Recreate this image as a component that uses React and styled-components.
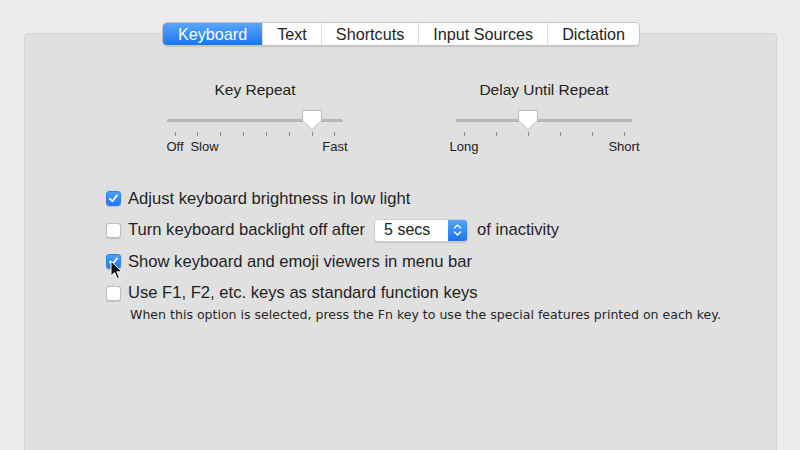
import React from 'react'
import styled, { createGlobalStyle } from 'styled-components'

const GlobalStyle = createGlobalStyle`
  html, body {
    margin: 0;
    padding: 0;
    background: #ececec;
    font-family: 'Liberation Sans', Arial, Helvetica, sans-serif;
    color: #262626;
  }
  * { box-sizing: border-box; }
`

const Window = styled.div`
  width: 800px;
  height: 450px;
  overflow: hidden;
  background: #ececec;
  padding: 33px 23px 0 24px;
  position: relative;
`

const Panel = styled.div`
  height: 440px;
  background: #e0e0e0;
  border: 1px solid #d4d4d4;
  border-radius: 4px;
  display: flex;
  flex-direction: column;
`

const TabBar = styled.div`
  align-self: center;
  display: flex;
  margin-top: -12px;
  margin-left: 1px;
  height: 24px;
  background: #fff;
  border: 1px solid #c4c4c4;
  border-radius: 5px;
  box-shadow: 0 1px 1px rgba(0, 0, 0, 0.12);
  overflow: hidden;
`

const Tab = styled.div`
  display: flex;
  align-items: center;
  justify-content: center;
  padding: 0 ${({ pad }) => pad}px;
  font-size: 16.2px;
  color: ${({ active }) => (active ? '#fff' : '#1f1f1f')};
  background: ${({ active }) => (active ? 'linear-gradient(#5aa6fd, #1a76f5)' : '#fff')};
  border-left: ${({ first }) => (first ? 'none' : '1px solid #dcdcdc')};
`

const SliderRow = styled.div`
  display: flex;
  justify-content: center;
  gap: 113px;
  margin-top: 34px;
  margin-left: -2px;
`

const SliderCol = styled.div`
  width: 176px;
  display: flex;
  flex-direction: column;
  align-items: stretch;
`

const SliderTitle = styled.div`
  text-align: center;
  font-size: 15.5px;
  line-height: 20px;
  color: #222;
`

const TrackArea = styled.div`
  position: relative;
  height: 20px;
  margin-top: 10px;
  display: flex;
  align-items: center;
`

const Track = styled.div`
  flex: 1;
  height: 3px;
  border-radius: 2px;
  background: #b5b5b5;
`

const Thumb = styled.svg`
  position: absolute;
  top: -1px;
  width: 22px;
  height: 23px;
`

const TickGrid = styled.div`
  display: grid;
  grid-template-columns: repeat(${({ n }) => n}, ${({ cell }) => cell}px);
  margin-left: ${({ cell }) => 8 - cell / 2}px;
  justify-items: center;
`

const Tick = styled.div`
  width: 1px;
  height: 4px;
  background: #8c8c8c;
  margin-top: 2px;
`

const TickLabel = styled.div`
  font-size: 13px;
  line-height: 16px;
  margin-top: 3px;
  white-space: nowrap;
  color: #222;
  grid-row: 2;
  justify-self: ${({ start }) => (start ? 'start' : 'center')};
  margin-left: ${({ start }) => (start ? 4 : 0)}px;
`

const Options = styled.div`
  display: flex;
  flex-direction: column;
  margin-top: 28px;
  padding-left: 81px;
`

const OptionRow = styled.label`
  display: flex;
  align-items: center;
  height: 31.5px;
  font-size: 16.6px;
  color: #1f1f1f;
`

const Box = styled.span`
  width: 15px;
  height: 15px;
  border-radius: 3px;
  margin-right: 7px;
  flex: none;
  display: flex;
  align-items: center;
  justify-content: center;
  background: ${({ checked }) => (checked ? 'linear-gradient(#4f9ffd, #1c78f4)' : '#fff')};
  border: 1px solid ${({ checked }) => (checked ? '#2f7fe8' : '#bdbdbd')};
  box-shadow: 0 0.5px 1px rgba(0, 0, 0, 0.15);
`

const Popup = styled.div`
  display: flex;
  height: 23px;
  width: 94px;
  margin: 0 9px;
  border-radius: 4px;
  background: #fff;
  border: 1px solid #cfcfcf;
  box-shadow: 0 1px 1px rgba(0, 0, 0, 0.12);
  overflow: hidden;
`

const PopupText = styled.div`
  flex: 1;
  padding-left: 9px;
  display: flex;
  align-items: center;
  font-size: 16px;
  color: #222;
`

const PopupArrows = styled.div`
  width: 19px;
  background: linear-gradient(#56a3fd, #1a74f3);
  display: flex;
  align-items: center;
  justify-content: center;
`

const Note = styled.div`
  font-family: 'DejaVu Sans', Verdana, sans-serif;
  font-size: 12.55px;
  color: #262626;
  padding-left: 24px;
  margin-top: -2px;
`

const Cursor = styled.svg`
  position: absolute;
  left: 110px;
  top: 260px;
  width: 13px;
  height: 20px;
`

const tabs = [
  { label: 'Keyboard', pad: 15 },
  { label: 'Text', pad: 14 },
  { label: 'Shortcuts', pad: 14 },
  { label: 'Input Sources', pad: 14 },
  { label: 'Dictation', pad: 14 }
]

const Check = () => (
  <svg width="11" height="11" viewBox="0 0 11 11">
    <path d="M2 5.8 L4.4 8.3 L9 2.4" fill="none" stroke="#fff" strokeWidth="1.8" strokeLinecap="round" strokeLinejoin="round" />
  </svg>
)

const Checkbox = ({ checked }) => <Box checked={checked}>{checked && <Check />}</Box>

const Slider = ({ title, ticks, value, labels }) => {
  const cell = 160 / (ticks - 1)
  return (
    <SliderCol>
      <SliderTitle>{title}</SliderTitle>
      <TrackArea>
        <Track />
        <Thumb viewBox="0 0 22 23" style={{ left: 8 + value * cell - 11 }}>
          <path d="M3.5 1.5 H18.5 Q20.5 1.5 20.5 3.5 V11.5 L11 21 L1.5 11.5 V3.5 Q1.5 1.5 3.5 1.5 Z" fill="#fff" stroke="#adadad" strokeWidth="0.8" />
        </Thumb>
      </TrackArea>
      <TickGrid n={ticks} cell={cell}>
        {Array.from({ length: ticks }).map((_, i) => <Tick key={i} />)}
        {labels.map(({ at, text, start }) => (
          <TickLabel key={text} start={start} style={{ gridColumn: at + 1 }}>{text}</TickLabel>
        ))}
      </TickGrid>
    </SliderCol>
  )
}

export default function App () {
  return (
    <>
      <GlobalStyle />
      <Window>
        <Panel>
          <TabBar>
            {tabs.map((t, i) => (
              <Tab key={t.label} pad={t.pad} active={i === 0} first={i === 0}>{t.label}</Tab>
            ))}
          </TabBar>
          <SliderRow>
            <Slider
              title="Key Repeat"
              ticks={8}
              value={6}
              labels={[{ at: 0, text: 'Off' }, { at: 1, text: 'Slow', start: true }, { at: 7, text: 'Fast' }]}
            />
            <Slider
              title="Delay Until Repeat"
              ticks={6}
              value={2}
              labels={[{ at: 0, text: 'Long' }, { at: 5, text: 'Short' }]}
            />
          </SliderRow>
          <Options>
            <OptionRow><Checkbox checked />Adjust keyboard brightness in low light</OptionRow>
            <OptionRow>
              <Checkbox />Turn keyboard backlight off after
              <Popup>
                <PopupText>5 secs</PopupText>
                <PopupArrows>
                  <svg width="9" height="14" viewBox="0 0 9 14">
                    <path d="M1.5 5 L4.5 2 L7.5 5 M1.5 9 L4.5 12 L7.5 9" fill="none" stroke="#fff" strokeWidth="1.4" strokeLinecap="round" strokeLinejoin="round" />
                  </svg>
                </PopupArrows>
              </Popup>
              of inactivity
            </OptionRow>
            <OptionRow><Checkbox checked />Show keyboard and emoji viewers in menu bar</OptionRow>
            <OptionRow><Checkbox />Use F1, F2, etc. keys as standard function keys</OptionRow>
            <Note>When this option is selected, press the Fn key to use the special features printed on each key.</Note>
          </Options>
        </Panel>
        <Cursor viewBox="0 0 13 20">
          <path d="M1 1 L1 16 L4.6 12.6 L7.2 18.5 L9.4 17.5 L6.9 11.8 L11.8 11.8 Z" fill="#111" stroke="#fff" strokeWidth="1" strokeLinejoin="round" />
        </Cursor>
      </Window>
    </>
  )
}
